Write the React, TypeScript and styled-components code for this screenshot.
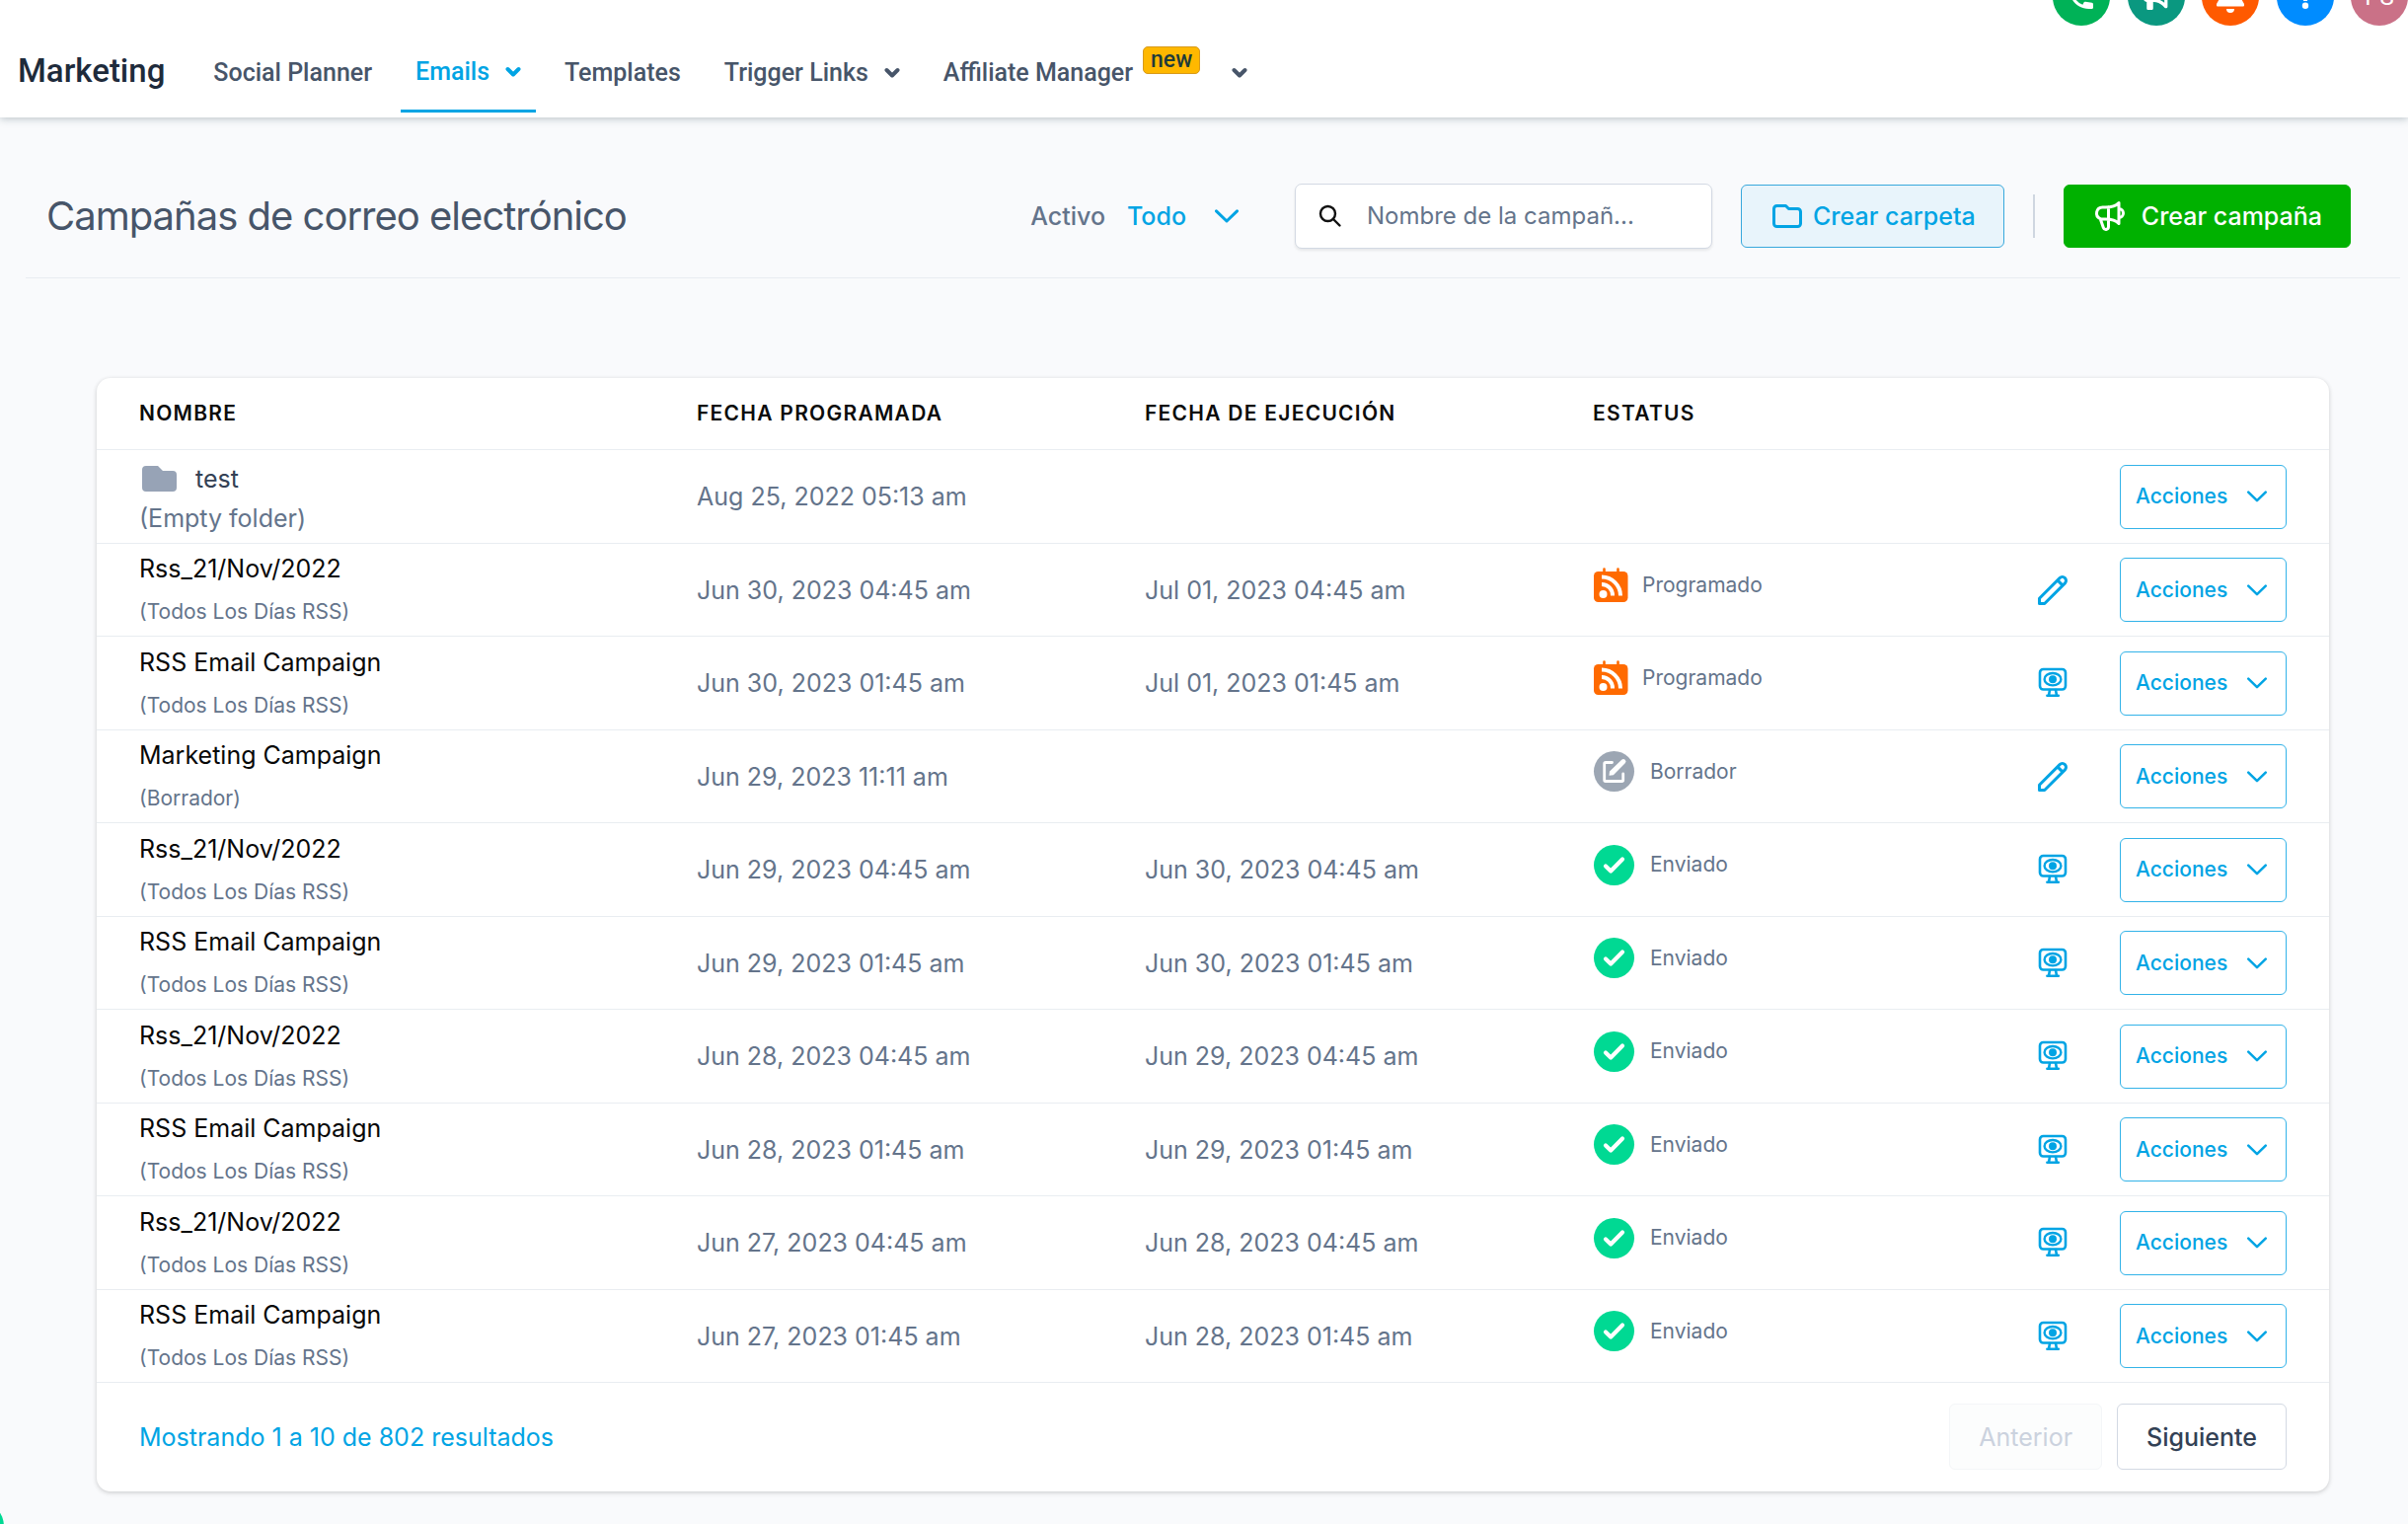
import React from "react";
import styled, { createGlobalStyle } from "styled-components";
import { FaBullhorn } from "react-icons/fa6";

const color = {
  primary: "#00a4e4",
  ink: "#1e2b3b",
  heading: "#475569",
  muted: "#64748b",
  strong: "#334155",
  line: "#e9edf1",
  page: "#f9fafc",
};

const GlobalStyle = createGlobalStyle`
  *, *::before, *::after { box-sizing: border-box; }
  body {
    margin: 0;
    min-height: 100vh;
    background: ${color.page};
    font-family: Inter, "Liberation Sans", sans-serif;
    font-size: 25px;
    line-height: 32px;
    color: ${color.muted};
  }
  button, input, select { font: inherit; color: inherit; margin: 0; }
  button { cursor: pointer; }
  svg { display: block; flex: none; }
`;

const Header = styled.header`
  background: #fff;
  box-shadow: 0 1px 8px rgba(60, 90, 100, 0.36);
  font-family: Roboto, "Liberation Sans", sans-serif;
`;

const QuickBar = styled.div`
  height: 26px;
  overflow: hidden;
  display: flex;
  justify-content: flex-end;
  align-items: flex-end;
`;

const QuickActions = styled.div`
  display: flex;
  justify-content: space-between;
  width: 360px;
`;

const QuickButton = styled.button<{ $bg: string }>`
  width: 58px;
  height: 58px;
  padding: 0;
  border: 0;
  border-radius: 50%;
  background: ${(p) => p.$bg};
  color: #fff;
  font-size: 24px;
  display: flex;
  align-items: center;
  justify-content: center;
`;

const Nav = styled.nav`
  display: flex;
  align-items: center;
  gap: 14px;
  padding: 8px 18px 5px;
`;

const Brand = styled.span`
  font-size: 33px;
  font-weight: 500;
  line-height: 40px;
  color: ${color.ink};
  margin-right: 20px;
  padding-bottom: 4px;
`;

const NavItem = styled.a<{ $active?: boolean }>`
  display: flex;
  align-items: center;
  height: 80px;
  padding: 0 15px;
  border: 0;
  border-bottom: ${(p) => (p.$active ? `3px solid ${color.primary}` : "0")};
  background: none;
  color: ${(p) => (p.$active ? color.primary : color.heading)};
  font-size: 25px;
  font-weight: 500;
  text-decoration: none;
`;

const NavCaret = styled.svg<{ $wide?: boolean }>`
  margin-left: ${(p) => (p.$wide ? 32 : 16)}px;
`;

const NewBadge = styled.span`
  align-self: flex-start;
  margin: 13px 0 0 10px;
  height: 28px;
  padding: 0 7px;
  border: 1px solid #d79a1c;
  border-radius: 5px;
  background: #ffb800;
  color: #1f3b3a;
  font-size: 23px;
  line-height: 25px;
`;

const TitleBar = styled.section`
  display: flex;
  align-items: center;
  margin: 0 8px 0 26px;
  padding: 67px 50px 29px 21px;
  border-bottom: 1px solid ${color.line};
`;

const Title = styled.h1`
  margin: 0 auto 0 0;
  font-size: 40px;
  font-weight: 400;
  line-height: 64px;
  letter-spacing: -0.025em;
  color: ${color.heading};
`;

const Filter = styled.label`
  display: flex;
  align-items: center;
  gap: 22px;
  font-weight: 500;
`;

const SelectBox = styled.span`
  position: relative;
  display: flex;
  align-items: center;
  color: ${color.primary};
  svg { position: absolute; right: 0; pointer-events: none; }
`;

const FilterSelect = styled.select`
  appearance: none;
  border: 0;
  padding: 0 52px 0 0;
  background: none;
  font-weight: 500;
`;

const SearchBox = styled.label`
  display: flex;
  align-items: center;
  width: 423px;
  height: 66px;
  margin: 0 29px 0 57px;
  padding: 0 22px;
  gap: 24px;
  border: 1px solid #d3d9e3;
  border-radius: 7px;
  background: #fff;
  box-shadow: 0 2px 3px rgba(0, 0, 0, 0.08);
`;

const SearchInput = styled.input`
  flex: 1;
  min-width: 0;
  border: 0;
  outline: 0;
  padding: 0;
  background: none;
  font-size: 24px;
  &::placeholder { color: ${color.muted}; opacity: 1; }
`;

const ActionButton = styled.button<{ $solid?: boolean }>`
  display: flex;
  align-items: center;
  gap: ${(p) => (p.$solid ? 14 : 8)}px;
  height: 64px;
  padding: 0 28px;
  border: 1px solid ${(p) => (p.$solid ? "#00b100" : "#38a8dc")};
  border-radius: 6px;
  background: ${(p) => (p.$solid ? "#00b100" : "#e8f4fb")};
  color: ${(p) => (p.$solid ? "#fff" : color.primary)};
  font-weight: 500;
`;

const Divider = styled.span`
  width: 2px;
  height: 44px;
  margin: 0 29px;
  background: #cfd6e0;
`;

const Card = styled.main`
  margin: 101px 80px 32px 98px;
  border-radius: 14px;
  background: #fff;
  box-shadow: 0 1px 4px rgba(0, 0, 0, 0.14), 0 2px 6px rgba(0, 0, 0, 0.06);
`;

const Table = styled.table`
  width: 100%;
  table-layout: fixed;
  border-spacing: 0;
`;

const Col = styled.col<{ $w?: number }>`
  width: ${(p) => (p.$w ? `${p.$w}px` : "auto")};
`;

const Th = styled.th`
  height: 73px;
  padding: 0 43px;
  border-bottom: 1px solid ${color.line};
  text-align: left;
  font-size: 21px;
  font-weight: 600;
  letter-spacing: 0.06em;
  white-space: nowrap;
  color: #0c0c0c;
`;

const Td = styled.td`
  height: 95px;
  padding: 0 43px;
  border-bottom: 1px solid ${color.line};
  white-space: nowrap;
  tr:nth-child(even) > & { height: 94px; }
`;

const CampaignName = styled.div`
  line-height: 32px;
  color: #080808;
  margin-bottom: 13px;
`;

const CampaignKind = styled.div`
  font-size: 21px;
  line-height: 30px;
`;

const FolderLine = styled.div`
  display: flex;
  align-items: center;
  gap: 16px;
  line-height: 44px;
  color: ${color.strong};
`;

const FolderNote = styled.div`
  line-height: 36px;
`;

const Status = styled.div<{ $gap: number }>`
  display: flex;
  align-items: center;
  gap: ${(p) => p.$gap}px;
  padding-bottom: 10px;
  font-size: 21px;
`;

const RowActions = styled.div`
  display: flex;
  align-items: center;
  justify-content: flex-end;
  gap: 50px;
`;

const IconLink = styled.a`
  color: ${color.primary};
`;

const MenuButton = styled.button`
  display: flex;
  align-items: center;
  justify-content: space-between;
  width: 169px;
  height: 65px;
  padding: 0 19px 0 15px;
  border: 1px solid #33b3e8;
  border-radius: 6px;
  background: #fff;
  color: ${color.primary};
  font-size: 21px;
  font-weight: 500;
`;

const Footer = styled.footer`
  display: flex;
  align-items: center;
  padding: 21px 43px 22px;
`;

const Summary = styled.p`
  margin: 0 auto 0 0;
  color: ${color.primary};
`;

const PageButton = styled.button`
  height: 67px;
  margin-left: 15px;
  padding: 0 29px;
  border: 1px solid #d3d9e3;
  border-radius: 6px;
  background: #fff;
  color: ${color.strong};
  font-weight: 500;
  &:disabled {
    border-color: #f4f6f8;
    background: #fcfdfd;
    color: #cbd2de;
    font-weight: 400;
  }
`;

const ChatBubble = styled.button`
  position: fixed;
  left: -44px;
  bottom: -26px;
  width: 48px;
  height: 48px;
  padding: 0;
  border: 0;
  border-radius: 50%;
  background: #00d993;
`;

const Caret = ({ wide }: { wide?: boolean }) => (
  <NavCaret $wide={wide} width="16" height="12" viewBox="0 0 16 12" fill="none" stroke="currentColor" strokeWidth="4" strokeLinecap="round" strokeLinejoin="round">
    <path d="M2.5 3l5.5 5.5L13.5 3" />
  </NavCaret>
);

const Chevron = ({ width }: { width: number }) => (
  <svg width={width} height={width / 2 + 2} viewBox="0 0 24 14" fill="none" stroke="currentColor" strokeWidth="3" strokeLinecap="round" strokeLinejoin="round">
    <path d="M1.5 1.8L12 12 22.5 1.8" />
  </svg>
);

const OUTLINE = {
  folder: "M3 7v10a2 2 0 002 2h14a2 2 0 002-2V9a2 2 0 00-2-2h-6l-2-2H5a2 2 0 00-2 2z",
  speaker:
    "M11 5.882V19.24a1.76 1.76 0 01-3.417.592l-2.147-6.15M18 13a3 3 0 100-6M5.436 13.683A4.001 4.001 0 017 6h1.832c4.1 0 7.625-1.234 9.168-3v14c-1.543-1.766-5.067-3-9.168-3H7a3.988 3.988 0 01-1.564-.317z",
  pencil:
    "M15.232 5.232l3.536 3.536m-2.036-5.036a2.5 2.5 0 113.536 3.536L6.5 21.036H3v-3.572L16.732 3.732z",
};

const OutlineIcon = ({ name }: { name: keyof typeof OUTLINE }) => (
  <svg width="36" height="36" viewBox="0 0 24 24" fill="none" stroke="currentColor" strokeWidth="2" strokeLinecap="round" strokeLinejoin="round">
    <path d={OUTLINE[name]} />
  </svg>
);

const MonitorIcon = () => (
  <svg width="36" height="36" viewBox="0 0 36 36" fill="none" stroke="currentColor" strokeWidth="2.6" strokeLinejoin="round" strokeLinecap="round">
    <rect x="5" y="4" width="26" height="20.5" rx="3.5" />
    <ellipse cx="18" cy="14.2" rx="8.4" ry="6.2" strokeWidth="2.4" />
    <circle cx="18" cy="14.2" r="4" fill="currentColor" stroke="none" />
    <path d="M15 25l-1 5.6M21 25l1 5.6M12.4 30.8h11.4" />
  </svg>
);

const SearchIcon = () => (
  <svg width="26" height="26" viewBox="0 0 26 26" fill="none" stroke="#111" strokeWidth="2.4" strokeLinecap="round">
    <circle cx="10.5" cy="10.5" r="7.5" />
    <path d="M16 16L22.500 22.500" />
  </svg>
);

const FolderSolid = () => (
  <svg width="41" height="28" viewBox="0 0 41 28">
    <path d="M7 1h12l5 5h10a4 4 0 014 4v13a4 4 0 01-4 4H7a4 4 0 01-4-4V5a4 4 0 014-4z" fill="#97a3b6" />
  </svg>
);

const RssCalendar = () => (
  <svg width="36" height="36" viewBox="0 0 36 36">
    <path d="M11.5 1.5v5M25.5 1.5v5" stroke="#ff6a00" strokeWidth="2.6" strokeLinecap="round" />
    <rect x="1" y="4" width="34.5" height="31" rx="4.5" fill="#ff6a00" />
    <circle cx="10.5" cy="27" r="4" fill="#fff" />
    <path d="M9 17a11 11 0 0111 11.5M9 9.5a19 19 0 0119 19" fill="none" stroke="#fff" strokeWidth="4" />
  </svg>
);

const DraftIcon = () => (
  <svg width="43" height="43" viewBox="0 0 43 43">
    <circle cx="21.5" cy="21.5" r="20.5" fill="#9ca6b3" />
    <path d="M19.500 12.500H13a1.300 1.300 0 00-1.300 1.300v16.400a1.300 1.300 0 001.300 1.300h16.400a1.300 1.300 0 001.300-1.300V24" fill="none" stroke="#fff" strokeWidth="2.8" strokeLinecap="round" />
    <path d="M17 21.5L29.2 9.8a2.4 2.4 0 013.5 3.5L20.8 25.3l-4.3.5z" fill="#fff" />
  </svg>
);

const SentIcon = () => (
  <svg width="43" height="43" viewBox="0 0 43 43">
    <circle cx="21.5" cy="21.5" r="20.5" fill="#00d993" />
    <path d="M13 22.5l5.2 5L30 15.5" fill="none" stroke="#fff" strokeWidth="4.2" strokeLinecap="round" strokeLinejoin="round" />
  </svg>
);

const PhoneIcon = () => (
  <svg width="30" height="30" viewBox="0 0 20 20" fill="#fff">
    <path d="M2 3a1 1 0 011-1h2.153a1 1 0 01.986.836l.74 4.435a1 1 0 01-.54 1.06l-1.548.773a11.037 11.037 0 006.105 6.105l.774-1.548a1 1 0 011.059-.54l4.435.74a1 1 0 01.836.986V17a1 1 0 01-1 1h-2C7.82 18 2 12.18 2 5V3z" />
  </svg>
);

const BellIcon = () => (
  <svg width="34" height="34" viewBox="0 0 34 34" fill="#fff">
    <path d="M17 1c-6 0-10 4.500-10 10v6l-4 7v1.500a1 1 0 001 1h26a1 1 0 001-1V24l-4-7v-6c0-5.500-4-10-10-10zM13 29h8a4 4 0 01-8 0z" />
  </svg>
);

const HelpIcon = () => (
  <svg width="30" height="30" viewBox="0 0 30 30">
    <path d="M9.500 8a5.500 5.500 0 1110 3.200c-1.600 2-4.500 3-4.500 7.800" fill="none" stroke="#fff" strokeWidth="4" />
    <circle cx="15" cy="23.800" r="3.200" fill="#fff" />
  </svg>
);

type State = "Programado" | "Borrador" | "Enviado";
type Campaign = { name: string; kind: string; planned: string; run?: string; state: State; edit?: boolean };

const DAILY = "(Todos Los Días RSS)";
const campaigns: Campaign[] = [
  { name: "Rss_21/Nov/2022", kind: DAILY, planned: "Jun 30, 2023 04:45 am", run: "Jul 01, 2023 04:45 am", state: "Programado", edit: true },
  { name: "RSS Email Campaign", kind: DAILY, planned: "Jun 30, 2023 01:45 am", run: "Jul 01, 2023 01:45 am", state: "Programado" },
  { name: "Marketing Campaign", kind: "(Borrador)", planned: "Jun 29, 2023 11:11 am", state: "Borrador", edit: true },
  { name: "Rss_21/Nov/2022", kind: DAILY, planned: "Jun 29, 2023 04:45 am", run: "Jun 30, 2023 04:45 am", state: "Enviado" },
  { name: "RSS Email Campaign", kind: DAILY, planned: "Jun 29, 2023 01:45 am", run: "Jun 30, 2023 01:45 am", state: "Enviado" },
  { name: "Rss_21/Nov/2022", kind: DAILY, planned: "Jun 28, 2023 04:45 am", run: "Jun 29, 2023 04:45 am", state: "Enviado" },
  { name: "RSS Email Campaign", kind: DAILY, planned: "Jun 28, 2023 01:45 am", run: "Jun 29, 2023 01:45 am", state: "Enviado" },
  { name: "Rss_21/Nov/2022", kind: DAILY, planned: "Jun 27, 2023 04:45 am", run: "Jun 28, 2023 04:45 am", state: "Enviado" },
  { name: "RSS Email Campaign", kind: DAILY, planned: "Jun 27, 2023 01:45 am", run: "Jun 28, 2023 01:45 am", state: "Enviado" },
];

const stateIcon: Record<State, React.ReactNode> = {
  Programado: <RssCalendar />,
  Borrador: <DraftIcon />,
  Enviado: <SentIcon />,
};

const ActionsMenu = () => (
  <MenuButton type="button" aria-haspopup="menu">
    Acciones
    <Chevron width={20} />
  </MenuButton>
);

export default function App() {
  return (
    <>
      <GlobalStyle />
      <Header>
        <QuickBar>
          <QuickActions>
            <QuickButton type="button" $bg="#00b257" aria-label="Llamar"><PhoneIcon /></QuickButton>
            <QuickButton type="button" $bg="#0a9880" aria-label="Novedades"><FaBullhorn size={26} /></QuickButton>
            <QuickButton type="button" $bg="#ff5a00" aria-label="Notificaciones"><BellIcon /></QuickButton>
            <QuickButton type="button" $bg="#008cff" aria-label="Ayuda"><HelpIcon /></QuickButton>
            <QuickButton type="button" $bg="#ca7187">PS</QuickButton>
          </QuickActions>
        </QuickBar>
        <Nav>
          <Brand>Marketing</Brand>
          <NavItem href="#social">Social Planner</NavItem>
          <NavItem as="button" type="button" $active>Emails<Caret /></NavItem>
          <NavItem href="#templates">Templates</NavItem>
          <NavItem as="button" type="button">Trigger Links<Caret /></NavItem>
          <NavItem as="button" type="button">
            Affiliate Manager<NewBadge>new</NewBadge><Caret wide />
          </NavItem>
        </Nav>
      </Header>

      <TitleBar>
        <Title>Campañas de correo electrónico</Title>
        <Filter>
          Activo
          <SelectBox>
            <FilterSelect defaultValue="Todo"><option>Todo</option></FilterSelect>
            <Chevron width={24} />
          </SelectBox>
        </Filter>
        <SearchBox>
          <SearchIcon />
          <SearchInput type="search" placeholder="Nombre de la campañ..." />
        </SearchBox>
        <ActionButton type="button"><OutlineIcon name="folder" />Crear carpeta</ActionButton>
        <Divider />
        <ActionButton type="button" $solid><OutlineIcon name="speaker" />Crear campaña</ActionButton>
      </TitleBar>

      <Card>
        <Table>
          <colgroup>
            <Col $w={565} /><Col $w={454} /><Col $w={454} /><Col /><Col $w={360} />
          </colgroup>
          <thead>
            <tr>
              <Th>NOMBRE</Th><Th>FECHA PROGRAMADA</Th><Th>FECHA DE EJECUCIÓN</Th><Th>ESTATUS</Th><Th />
            </tr>
          </thead>
          <tbody>
            <tr>
              <Td>
                <FolderLine><FolderSolid />test</FolderLine>
                <FolderNote>(Empty folder)</FolderNote>
              </Td>
              <Td>Aug 25, 2022 05:13 am</Td>
              <Td />
              <Td />
              <Td><RowActions><ActionsMenu /></RowActions></Td>
            </tr>
            {campaigns.map((c, i) => (
              <tr key={i}>
                <Td>
                  <CampaignName>{c.name}</CampaignName>
                  <CampaignKind>{c.kind}</CampaignKind>
                </Td>
                <Td>{c.planned}</Td>
                <Td>{c.run}</Td>
                <Td>
                  <Status $gap={c.state === "Programado" ? 14 : 15}>{stateIcon[c.state]}{c.state}</Status>
                </Td>
                <Td>
                  <RowActions>
                    <IconLink href="#campaign" aria-label={c.name}>
                      {c.edit ? <OutlineIcon name="pencil" /> : <MonitorIcon />}
                    </IconLink>
                    <ActionsMenu />
                  </RowActions>
                </Td>
              </tr>
            ))}
          </tbody>
        </Table>
        <Footer>
          <Summary>Mostrando 1 a 10 de 802 resultados</Summary>
          <PageButton type="button" disabled>Anterior</PageButton>
          <PageButton type="button">Siguiente</PageButton>
        </Footer>
      </Card>
      <ChatBubble type="button" aria-label="Chat" />
    </>
  );
}
